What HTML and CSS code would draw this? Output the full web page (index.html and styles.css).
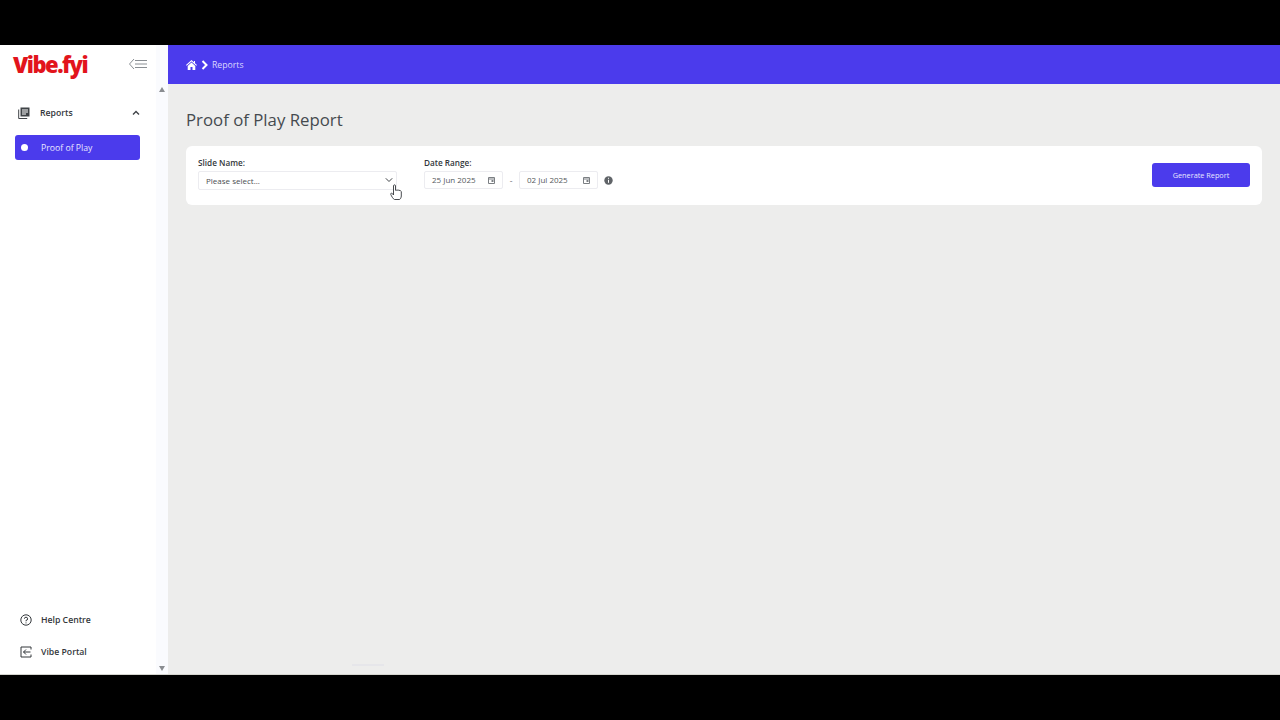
FILE: index.html
```html
<!DOCTYPE html>
<html lang="en">
<head>
<meta charset="utf-8">
<title>Proof of Play Report</title>
<link rel="stylesheet" href="styles.css">
</head>
<body>
<div class="letterbox"></div>
<div class="app">
  <aside class="sidebar">
    <div class="side-main">
      <div class="brand">
        <span class="logo">Vibe.fyi</span>
        <svg class="collapse" width="20" height="12" viewBox="0 0 20 12" fill="none" stroke="#8a8f94" stroke-width="1"><path d="M6 1 1.500 6 6 11"/><path d="M7 2.500h12M7 6h12M7 9.500h12"/></svg>
      </div>
      <nav class="nav">
        <div class="nav-head">
          <svg class="nav-icon" width="12" height="12" viewBox="0 0 12 12"><path fill="#3f4347" d="M2.500 0.500h9v9h-9z"/><path fill="none" stroke="#3f4347" d="M0.700 2.500v9h8.500"/><path stroke="#fff" d="M4 3h6M4 5h6M4 7h4"/></svg>
          <span class="nav-label">Reports</span>
          <svg class="chev-up" width="8" height="6" viewBox="0 0 8 6" fill="none" stroke="#3f4347" stroke-width="1.400"><path d="M1 4.500 4 1.500l3 3"/></svg>
        </div>
        <div class="nav-active"><span class="dot"></span><span>Proof of Play</span></div>
      </nav>
      <div class="side-foot">
        <div class="foot-item">
          <svg width="12" height="12" viewBox="0 0 12 12" fill="none" stroke="#33373b"><circle cx="6" cy="6" r="5.200"/><path d="M4.400 4.700A1.600 1.600 0 1 1 6 6.400v.9M6 8.400v1"/></svg>
          <span>Help Centre</span>
        </div>
        <div class="foot-item">
          <svg width="12" height="12" viewBox="0 0 12 12" fill="none" stroke="#33373b"><path d="M11 3.500V1H1v10h10V8.500"/><path d="M10.500 6H3.500M6 3.500 3.500 6 6 8.500"/></svg>
          <span>Vibe Portal</span>
        </div>
      </div>
    </div>
    <div class="scrollbar">
      <span class="arrow-up"></span>
      <span class="arrow-down"></span>
    </div>
  </aside>
  <main class="content">
    <header class="topbar">
      <svg width="11" height="10" viewBox="0 0 11 10" fill="#fff"><path d="M5.500 0 0 5l.7.7L5.500 1.400l4.800 4.300.7-.7-2-1.800V1H8v1.300z"/><path d="M1.700 6 5.500 2.600 9.300 6v4H6.500V7h-2v3H1.700z"/></svg>
      <svg width="7" height="10" viewBox="0 0 7 10" fill="none" stroke="#fff" stroke-width="2"><path d="M1.500 1 5.500 5l-4 4"/></svg>
      <span class="crumb">Reports</span>
    </header>
    <section class="page">
      <h1 class="title">Proof of Play Report</h1>
      <div class="card">
        <div class="field slide-field">
          <label class="label">Slide Name:</label>
          <div class="select">
            <span>Please select...</span>
            <svg width="8" height="6" viewBox="0 0 8 6" fill="none" stroke="#3f4347" stroke-width="1"><path d="M.8 1.300 4 4.500l3.200-3.200"/></svg>
          </div>
          <svg class="cursor" width="12" height="17" viewBox="0 0 12 17"><path fill="#fff" stroke="#33373b" stroke-width=".9" d="M3.500 1.800c0-1.300 2-1.300 2 0v4.500c1.500-.5 5.300-.2 5.800 1.200v4.500c0 1.500-1 3.500-2 3.500H4.500C3 15 1.500 12 .8 10.500c-.5-1.300 1-1.800 1.700-.8l1 1.300z"/></svg>
        </div>
        <div class="field">
          <label class="label">Date Range:</label>
          <div class="dates">
            <div class="date"><span>25 Jun 2025</span><svg class="cal" width="7" height="8" viewBox="0 0 7 8" fill="none" stroke="#7b7f83"><path d="M.500 1.500h6v6h-6zM.500 3h6"/><path fill="#7b7f83" stroke="none" d="M3.500 4h2v2h-2z"/></svg></div>
            <span class="sep">-</span>
            <div class="date"><span>02 Jul 2025</span><svg class="cal" width="7" height="8" viewBox="0 0 7 8" fill="none" stroke="#7b7f83"><path d="M.500 1.500h6v6h-6zM.500 3h6"/><path fill="#7b7f83" stroke="none" d="M3.500 4h2v2h-2z"/></svg></div>
            <svg class="info" width="9" height="9" viewBox="0 0 9 9"><circle cx="4.500" cy="4.500" r="4.200" fill="#606468"/><path stroke="#fff" d="M4.500 3.800v3M4.500 1.800v1"/></svg>
          </div>
        </div>
        <button class="generate" type="button">Generate Report</button>
      </div>
    </section>
    <span class="ghost-bar"></span>
  </main>
</div>
<div class="letterbox"></div>
</body>
</html>
```
FILE: styles.css
```css
* { box-sizing: border-box; }
html, body { height: 100%; }
body {
  margin: 0;
  background: #000;
  display: flex;
  flex-direction: column;
  font-family: "Open Sans", "Liberation Sans", sans-serif;
  color: #33373b;
  overflow: hidden;
}
.letterbox { height: 45px; flex: none; background: #000; }
.app { height: 630px; flex: none; display: flex; border-bottom: 1px solid #d5d5cf; }

.sidebar { width: 168px; flex: none; display: flex; background: #fff; }
.side-main { flex: 1; display: flex; flex-direction: column; min-width: 0; }
.brand { height: 38px; display: flex; align-items: center; justify-content: space-between; padding: 0 8px 0 13px; }
.logo { font-weight: 800; font-size: 22px; letter-spacing: -1.500px; color: #e2141c; line-height: 38px; }
.nav { padding: 16px 16px 0 15px; flex: 1; }
.nav-head { height: 24px; display: flex; align-items: center; padding: 0 0 0 3px; font-size: 8.700px; font-weight: 600; margin-top: 2px; }
.nav-icon { margin-right: 10px; flex: none; }
.nav-label { flex: 1; color: #33373b; }
.nav-active {
  margin-top: 10px;
  height: 25px;
  background: #4b3bec;
  border-radius: 3px;
  color: #e9e7ff;
  font-size: 8.700px;
  font-weight: 500;
  display: flex;
  align-items: center;
  padding-left: 6px;
}
.dot { width: 7px; height: 7px; border-radius: 50%; background: #fff; margin-right: 13px; }
.side-foot { padding: 0 0 12px 20px; display: flex; flex-direction: column; gap: 12px; }
.foot-item { height: 20px; display: flex; align-items: center; gap: 9px; font-size: 8.700px; font-weight: 600; }
.scrollbar { width: 12px; flex: none; background: #fafbfe; display: flex; flex-direction: column; justify-content: space-between; align-items: center; padding: 42px 0 3px; }
.arrow-up { border: 3.500px solid transparent; border-top: 0; border-bottom: 5px solid #8a8d91; }
.arrow-down { border: 3.500px solid transparent; border-bottom: 0; border-top: 5px solid #8a8d91; }

.content { flex: 1; display: flex; flex-direction: column; background: #ededec; min-width: 0; position: relative; }
.topbar { height: 39px; flex: none; background: #4b3bec; display: flex; align-items: center; padding-left: 18px; gap: 4px; }
.crumb { color: #dcd9ff; font-size: 8.700px; }
.page { padding: 26px 18px 0; }
.title { margin: 0; font-size: 16.800px; font-weight: 400; line-height: 20px; color: #454a4f; }
.card {
  margin-top: 16px;
  height: 59px;
  background: #fff;
  border-radius: 6px;
  display: flex;
  align-items: flex-start;
  padding: 11px 12px 0 12px;
}
.field { display: flex; flex-direction: column; position: relative; }
.slide-field { width: 199px; margin-right: 27px; }
.label { font-size: 8.200px; font-weight: 600; line-height: 11px; color: #33373b; margin-bottom: 3px; }
.select {
  height: 19px;
  border: 1px solid #ececf0;
  border-radius: 2px;
  display: flex;
  align-items: center;
  justify-content: space-between;
  padding: 0 3px 1px 7px;
  font-size: 8px;
  color: #4a4e52;
}
.cursor { position: absolute; right: -5px; top: 27px; }
.dates { display: flex; align-items: center; }
.date {
  width: 79px;
  height: 18px;
  border: 1px solid #ececf0;
  border-radius: 2px;
  display: flex;
  align-items: center;
  justify-content: space-between;
  padding: 0 7px 1px 7px;
  font-size: 8px;
  color: #55595d;
}
.sep { width: 16px; text-align: center; font-size: 8.500px; color: #77797c; }
.info { margin-left: 6px; }
.generate {
  margin-left: auto;
  margin-top: 6px;
  width: 98px;
  height: 24px;
  border: 0;
  border-radius: 3px;
  background: #4b3bec;
  color: #e9e7ff;
  font: 500 7.300px "Open Sans", "Liberation Sans", sans-serif;
  padding: 0;
}
.ghost-bar { position: absolute; left: 184px; bottom: 8px; width: 32px; height: 2px; background: #e6e6ea; }
```
